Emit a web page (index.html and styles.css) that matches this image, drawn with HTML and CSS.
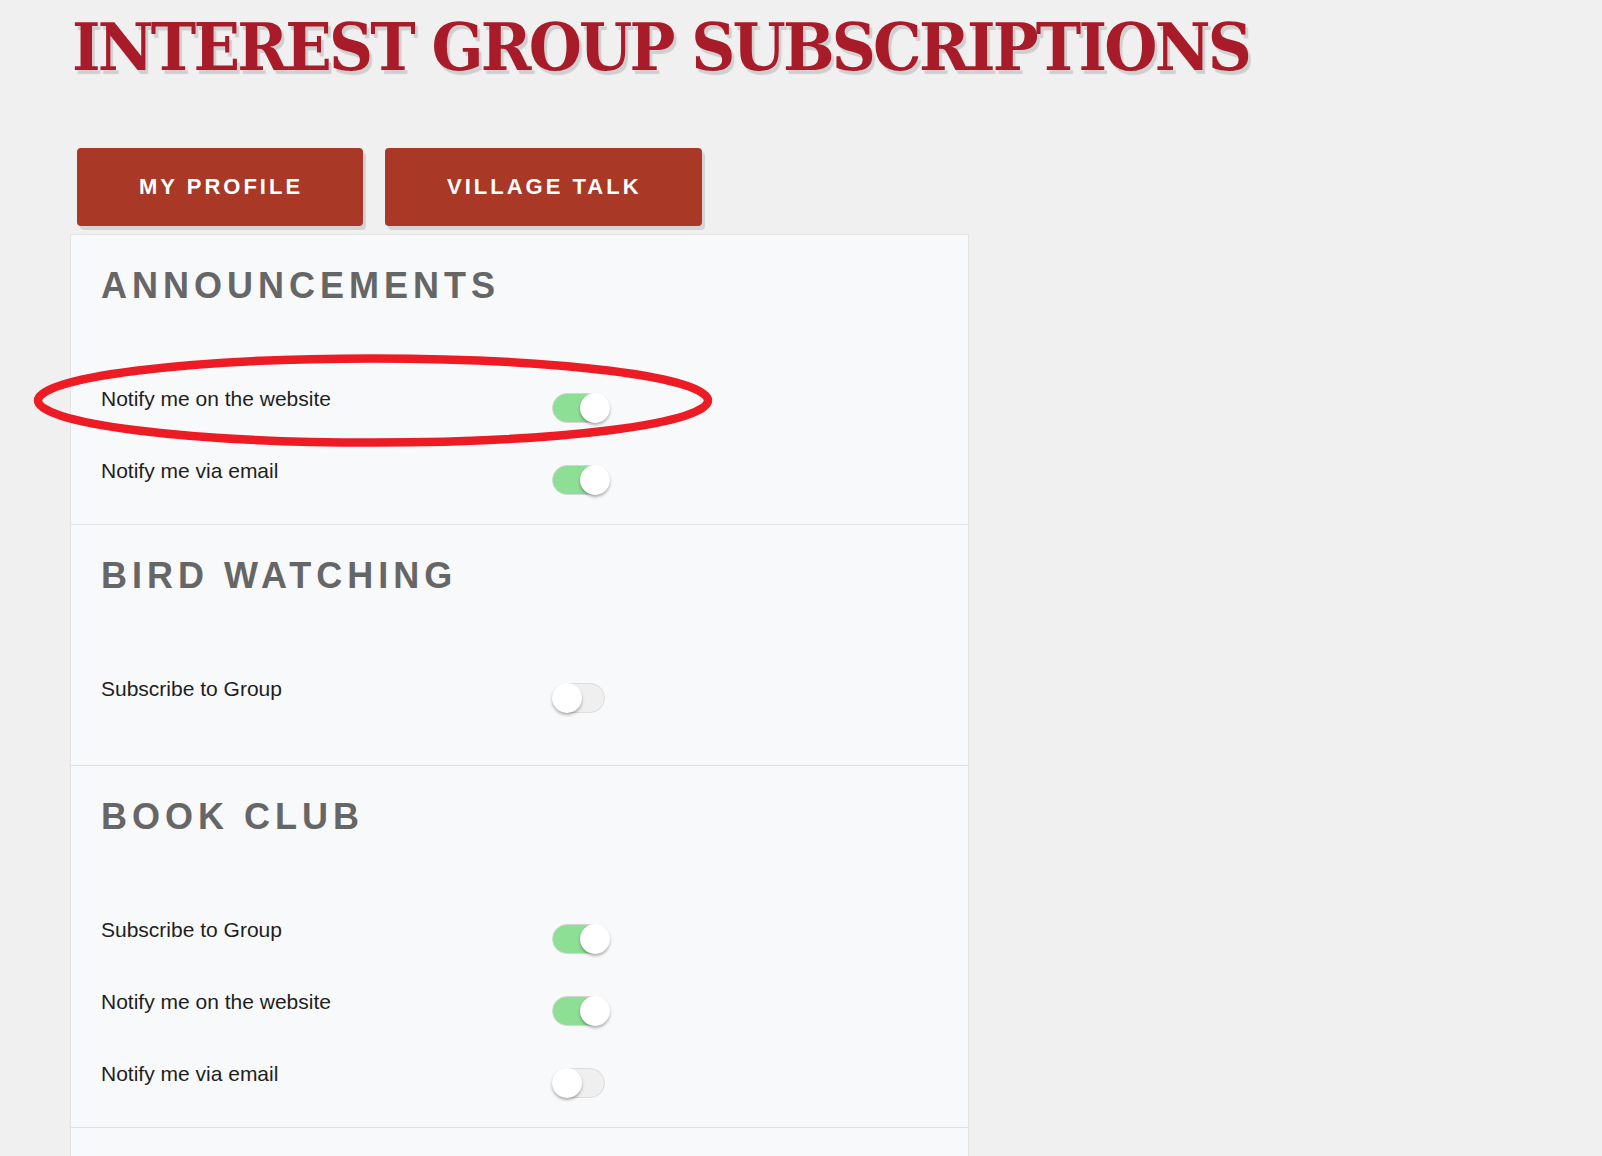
FILE: index.html
```html
<!DOCTYPE html>
<html lang="en">
<head>
<meta charset="utf-8">
<title>Interest Group Subscriptions</title>
<link rel="stylesheet" href="styles.css">
</head>
<body>
<div class="page">
  <h1 class="page-title">INTEREST GROUP SUBSCRIPTIONS</h1>

  <nav class="tabs">
    <a class="tab-btn" href="#">MY PROFILE</a>
    <a class="tab-btn" href="#">VILLAGE TALK</a>
  </nav>

  <div class="groups">
    <section class="group">
      <h2 class="group-title">ANNOUNCEMENTS</h2>
      <div class="rows">
        <div class="row">
          <span class="row-label">Notify me on the website</span>
          <span class="switch is-on"><span class="knob"></span></span>
        </div>
        <div class="row">
          <span class="row-label">Notify me via email</span>
          <span class="switch is-on"><span class="knob"></span></span>
        </div>
      </div>
    </section>

    <section class="group group--closed">
      <h2 class="group-title">BIRD WATCHING</h2>
      <div class="rows">
        <div class="row">
          <span class="row-label">Subscribe to Group</span>
          <span class="switch"><span class="knob"></span></span>
        </div>
      </div>
    </section>

    <section class="group">
      <h2 class="group-title">BOOK CLUB</h2>
      <div class="rows">
        <div class="row">
          <span class="row-label">Subscribe to Group</span>
          <span class="switch is-on"><span class="knob"></span></span>
        </div>
        <div class="row">
          <span class="row-label">Notify me on the website</span>
          <span class="switch is-on"><span class="knob"></span></span>
        </div>
        <div class="row">
          <span class="row-label">Notify me via email</span>
          <span class="switch"><span class="knob"></span></span>
        </div>
      </div>
    </section>

    <section class="group group--more"></section>
  </div>

  <svg class="highlight" width="700" height="104" viewBox="0 0 700 104" aria-hidden="true">
    <ellipse cx="345" cy="50.5" rx="335" ry="42" fill="none" stroke="#ed1c24" stroke-width="8.5"/>
  </svg>
</div>
</body>
</html>
```

FILE: styles.css
```css
html, body {
  margin: 0;
  padding: 0;
}

body {
  background: #f0f0f0;
  font-family: "Liberation Sans", Arial, sans-serif;
  color: #222;
}

.page {
  position: relative;
  padding: 14px 0 0 70px;
}

.page-title {
  margin: 0 0 0 2px;
  font-family: "DejaVu Serif", serif;
  font-weight: bold;
  font-size: 66px;
  line-height: 66px;
  letter-spacing: -3px;
  color: #a81b29;
  text-shadow: 3px 4px 1px #cfcfcf;
  white-space: nowrap;
  transform: scaleX(0.925);
  transform-origin: left center;
}

.tabs {
  display: flex;
  gap: 22px;
  margin: 68px 0 0 7px;
}

.tab-btn {
  display: inline-flex;
  align-items: center;
  height: 78px;
  padding: 0 60px 0 62px;
  background: #a93826;
  border-radius: 4px;
  box-shadow: 3px 4px 0 #d4d4d4;
  color: #fff;
  text-decoration: none;
  font-weight: bold;
  font-size: 22px;
  letter-spacing: 3px;
}

.groups {
  width: 897px;
  margin-top: 8px;
  background: #f8f9fa;
  border: 1px solid #e3e3e3;
}

.group {
  padding: 30px 30px 29px;
  border-bottom: 1px solid #e0e1e2;
}

.group--closed {
  padding-bottom: 52px;
}

.group--more {
  height: 120px;
  padding: 0;
  border-bottom: 0;
}

.group-title {
  margin: 0 0 78px;
  font-size: 36px;
  line-height: 42px;
  font-weight: bold;
  letter-spacing: 5px;
  color: #666;
}

.rows {
  display: flex;
  flex-direction: column;
  gap: 34px;
}

.row {
  display: flex;
  align-items: flex-start;
}

.row-label {
  width: 451px;
  padding-top: 2px;
  font-size: 21px;
  line-height: 24px;
  color: #1e1e1e;
}

.switch {
  position: relative;
  box-sizing: border-box;
  width: 53px;
  height: 30px;
  margin-top: 8px;
  border: 1px solid #dcdcdc;
  border-radius: 15px;
  background: #efefef;
}

.switch.is-on {
  background: #8ddf95;
  border-color: #d6d6d6;
}

.knob {
  position: absolute;
  left: -1px;
  top: -1px;
  width: 30px;
  height: 30px;
  border-radius: 50%;
  background: #fff;
  box-shadow: 0 2px 3px rgba(0, 0, 0, 0.3);
}

.switch.is-on .knob {
  left: 27px;
}

.highlight {
  position: absolute;
  left: 28px;
  top: 350px;
  pointer-events: none;
}
```
